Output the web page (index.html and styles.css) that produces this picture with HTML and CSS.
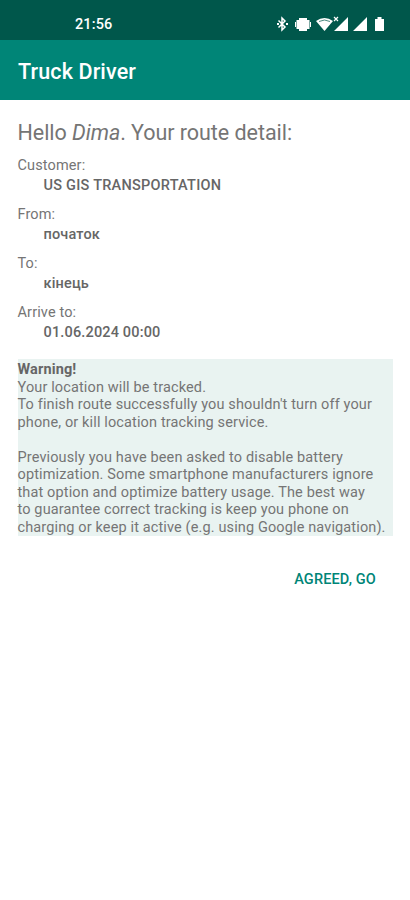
FILE: index.html
```html
<!DOCTYPE html>
<html lang="en">
<head>
<meta charset="utf-8">
<title>Truck Driver</title>
<link rel="stylesheet" href="styles.css">
</head>
<body>
<div class="status">
  <span class="clock">21:56</span>
  <svg class="icons" width="112" height="20" viewBox="0 0 112 20" fill="#fff">
    <path d="M2.500 6.500l6.500 6.500-3 3V4l3 3-6.500 6.500" fill="none" stroke="#fff" stroke-width="1.500"/>
    <path d="M1 9h2v2H1zM10 9h2v2h-2z"/>
    <path d="M23 4h8v13h-8zM20.500 6H23v9h-2.500zM31 6h2.500v9H31zM19 8h1v5h-1zM34 8h1v5h-1z"/>
    <path d="M40 7Q48.500 1 57 7L48.500 17z"/>
    <path d="M43 7.500q5.500-3 11 0" fill="none" stroke="#00574b" stroke-width=".7"/>
    <path d="M58 3l4 4M62 3l-4 4" stroke="#fff" stroke-width="1.200"/>
    <path d="M72 3v14H58zM91 3v14H77zM99 5h2.500V3h4v2h2.500v12h-9z"/>
  </svg>
</div>
<header class="appbar">Truck Driver</header>
<main class="content">
  <h1 class="greeting">Hello <em>Dima</em>. Your route detail:</h1>
  <dl class="details">
    <dt>Customer:</dt><dd>US GIS TRANSPORTATION</dd>
    <dt>From:</dt><dd>початок</dd>
    <dt>To:</dt><dd>кінець</dd>
    <dt>Arrive to:</dt><dd>01.06.2024 00:00</dd>
  </dl>
  <section class="warning">
    <strong>Warning!</strong><br>
    Your location will be tracked.<br>
    To finish route successfully you shouldn't turn off your<br>
    phone, or kill location tracking service.<br><br>
    Previously you have been asked to disable battery<br>
    optimization. Some smartphone manufacturers ignore<br>
    that option and optimize battery usage. The best way<br>
    to guarantee correct tracking is keep you phone on<br>
    charging or keep it active (e.g. using Google navigation).
  </section>
  <button class="agree">AGREED, GO</button>
</main>
</body>
</html>
```
FILE: styles.css
```css
* { box-sizing: border-box; }
body { margin: 0; height: 900px; background: #fff; color: #757575; font-family: Roboto, sans-serif; font-size: 14.500px; letter-spacing: .13px; overflow: hidden; }
.status { height: 40px; background: #00574b; color: #fff; display: flex; justify-content: space-between; align-items: center; padding: 8px 22px 0 75px; }
.clock { font-size: 14.500px; font-weight: 500; }
.appbar { height: 60px; background: #008577; color: #fff; display: flex; align-items: center; padding: 2px 18px 0; font-size: 21.500px; font-weight: 500; }
.content { padding: 20px 17px 0 17.500px; display: flex; flex-direction: column; }
.greeting { margin: 0; font-size: 21.500px; font-weight: 400; line-height: 26px; letter-spacing: -.05px; }
.details { margin: 10px 0 0; }
.details dt { line-height: 19px; }
.details dd { margin: 0 0 7px 26px; line-height: 22px; padding-bottom: 1px; font-weight: 500; color: #666; letter-spacing: .16px; }
.details dd:first-of-type { letter-spacing: .25px; }
.warning { margin-top: 7px; background: #e9f3f1; line-height: 17.500px; padding-top: 2px; white-space: nowrap; }
.warning strong { color: #666; }
.agree { align-self: flex-end; margin: 34px 17px 0 0; padding: 0; border: 0; background: none; color: #008577; font: 500 14.500px/20px Roboto, sans-serif; letter-spacing: .15px; }
```
